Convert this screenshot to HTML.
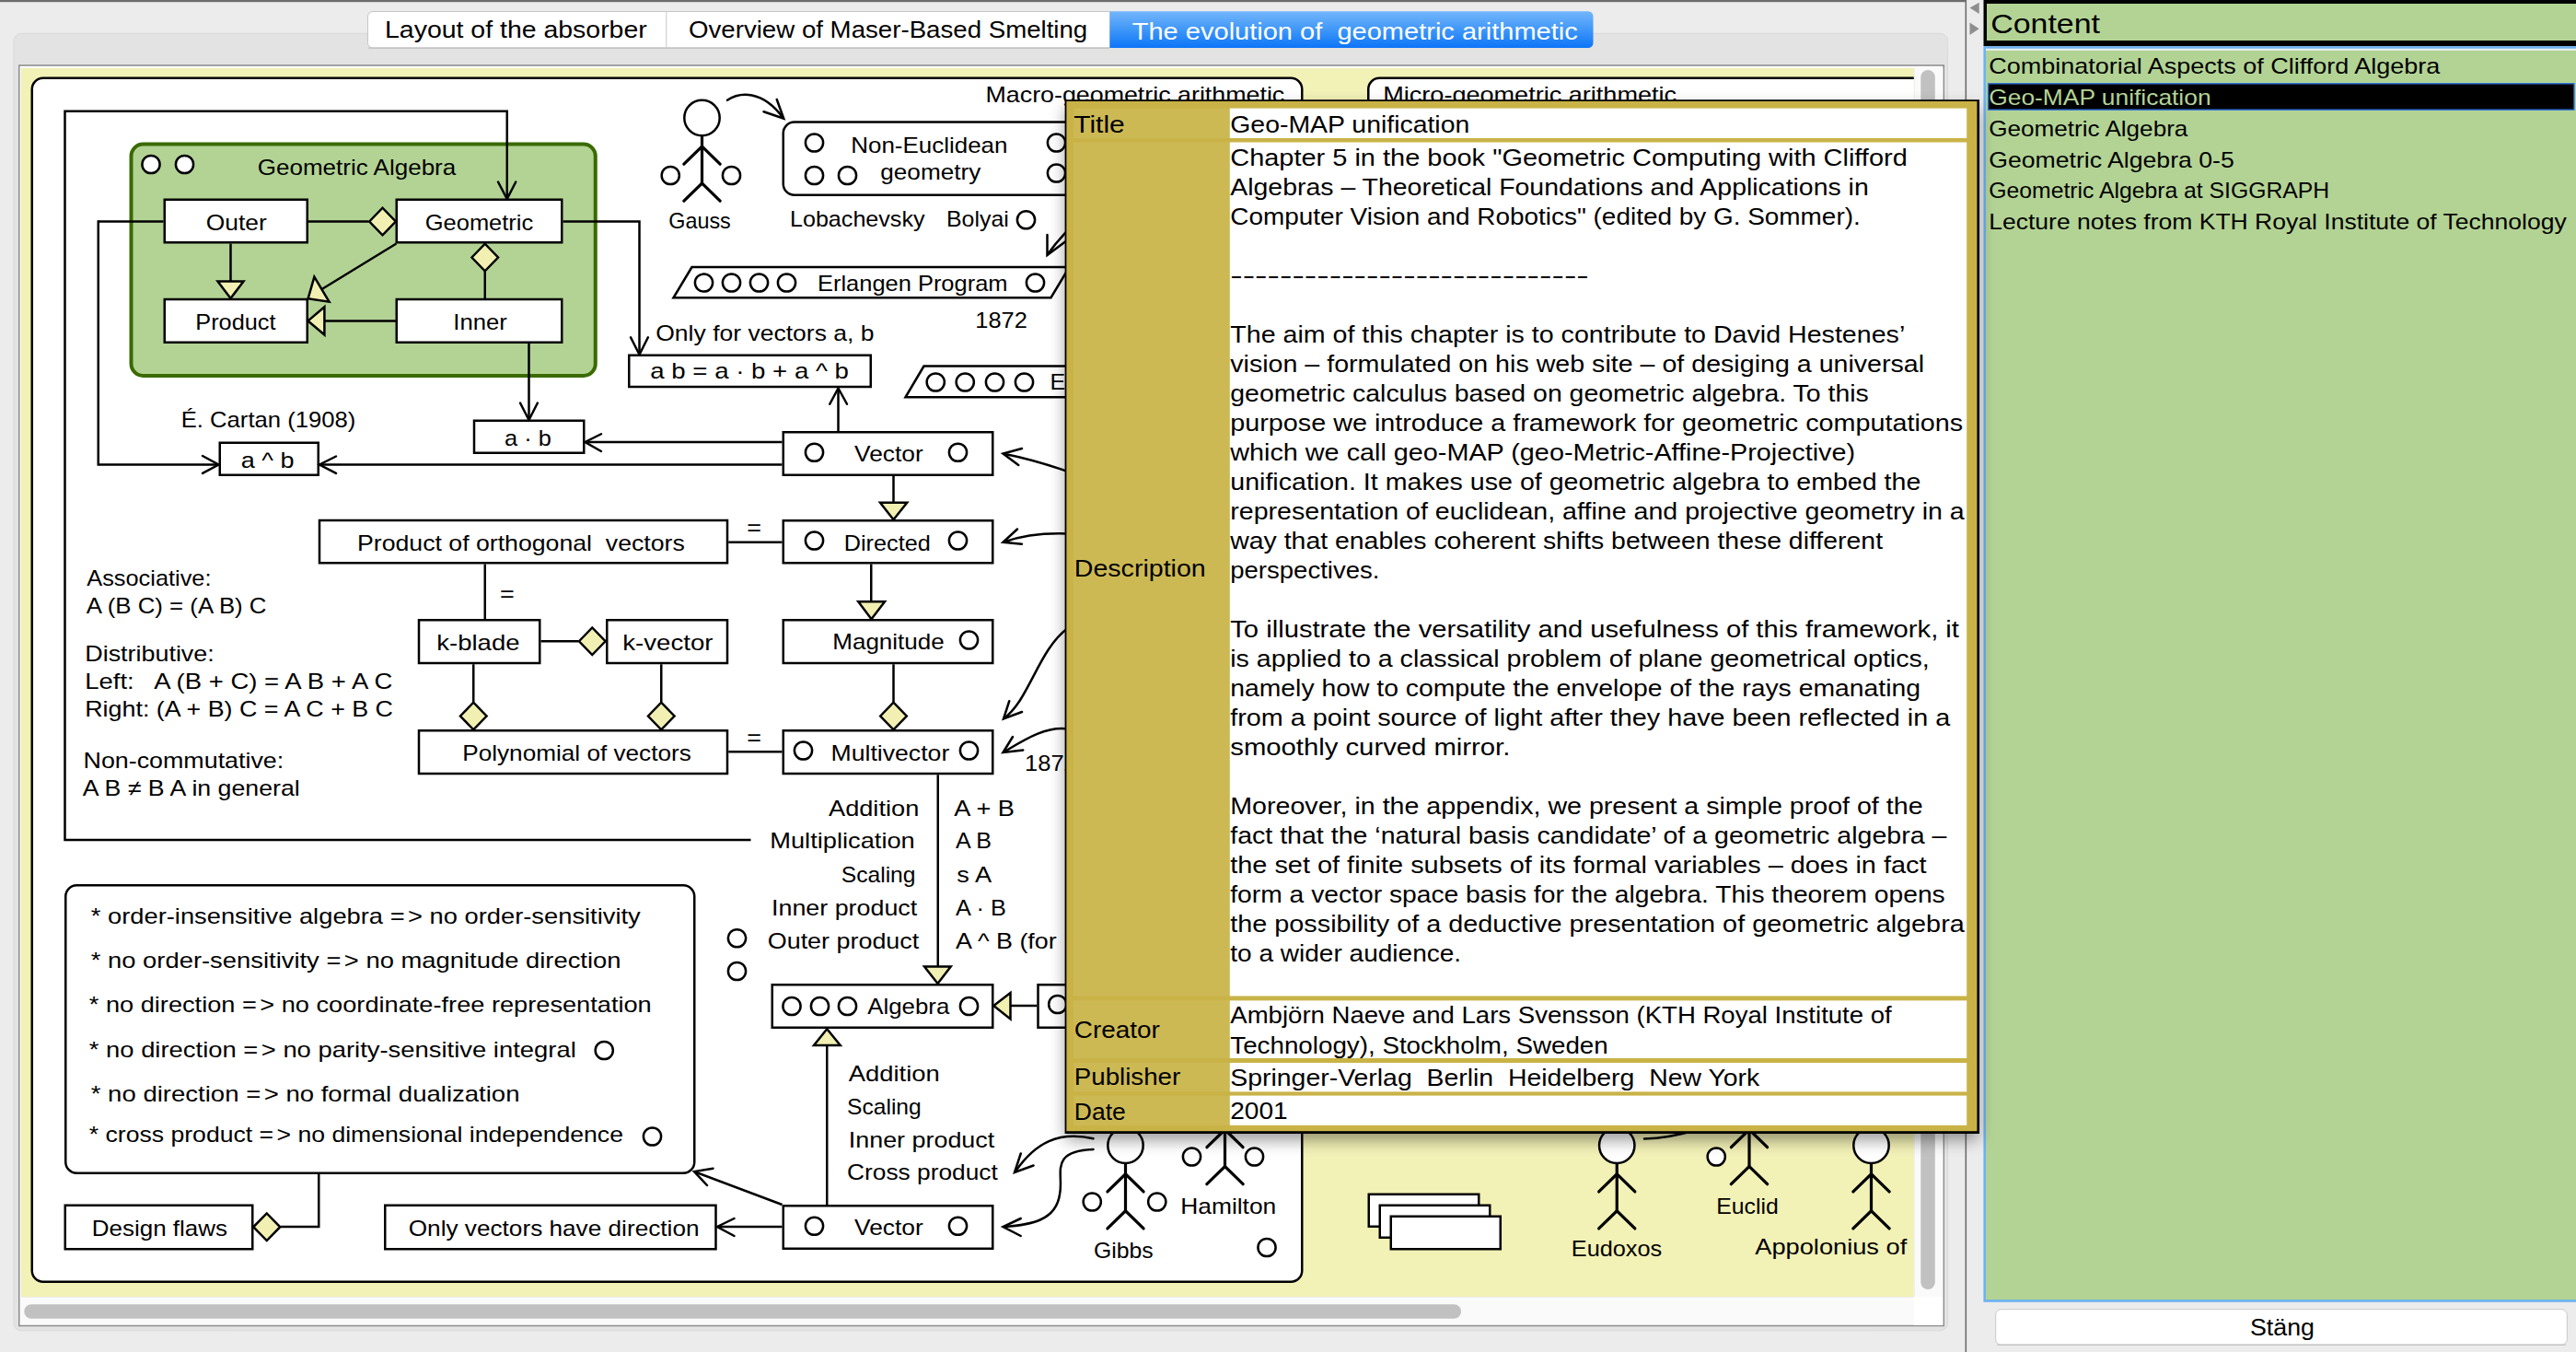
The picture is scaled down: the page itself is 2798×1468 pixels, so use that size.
<!DOCTYPE html>
<html><head><meta charset="utf-8"><title>Conzilla</title>
<style>
html,body{margin:0;padding:0;background:#ECECEC;}
body{width:2798px;height:1468px;overflow:hidden;}
svg{display:block;}
svg text{font-family:"Liberation Sans",sans-serif;}
</style></head><body>
<svg width="2798" height="1468" viewBox="0 0 2798 1468">
<defs>
<clipPath id="vp"><rect x="23" y="74" width="2055.75" height="1334"/></clipPath>
<linearGradient id="tabg" x1="0" y1="0" x2="0" y2="1"><stop offset="0" stop-color="#74B6FB"/><stop offset="0.5" stop-color="#3F97F8"/><stop offset="1" stop-color="#0D75F8"/></linearGradient>
<filter id="sh" x="-5%" y="-5%" width="110%" height="110%"><feGaussianBlur stdDeviation="9"/><feOffset dx="0" dy="8"/><feComponentTransfer><feFuncA type="linear" slope="0.42"/></feComponentTransfer></filter>
</defs>
<rect x="0" y="0" width="2798" height="1468" fill="#ECECEC"/>
<rect x="0" y="0" width="2135" height="2.2" fill="#6C6C6C"/>
<rect x="15" y="36.3" width="2100.5" height="1408.5" rx="8" ry="8" fill="#E3E3E3" stroke="#DADADA" stroke-width="1"/>
<path d="M405,12.5 H1205.5 V52 H405 a5.5,5.5 0 0 1 -5.5,-5.5 V18 a5.5,5.5 0 0 1 5.5,-5.5 z" fill="#fff" stroke="#C6C6C6" stroke-width="1"/>
<rect x="400" y="51.5" width="805" height="1.3" fill="#B9B9B9" opacity=".8"/>
<line x1="723.75" y1="13" x2="723.75" y2="51.5" stroke="#D2D2D2" stroke-width="1.2"/>
<path d="M1205.5,12.2 H1725 a5.5,5.5 0 0 1 5.5,5.5 V46.5 a5.5,5.5 0 0 1 -5.5,5.5 H1205.5 z" fill="url(#tabg)"/>
<text x="418.00" y="41.25" font-size="26" fill="#000" textLength="284.75" lengthAdjust="spacingAndGlyphs" xml:space="preserve" >Layout of the absorber</text>
<text x="748.00" y="41.25" font-size="26" fill="#000" textLength="433.25" lengthAdjust="spacingAndGlyphs" xml:space="preserve" >Overview of Maser-Based Smelting</text>
<text x="1229.75" y="42.50" font-size="26" fill="#fff" textLength="484.00" lengthAdjust="spacingAndGlyphs" xml:space="preserve" >The evolution of  geometric arithmetic</text>
<rect x="20.75" y="71" width="2090.5" height="1368.5" fill="#FAFAFA" stroke="#8C8C8C" stroke-width="1.5"/>
<rect x="22" y="72.2" width="2088" height="1.6" fill="#fff"/>
<rect x="2078.75" y="74" width="31.5" height="1334" fill="#FAFAFA"/>
<rect x="2078.75" y="74" width="1" height="1334" fill="#EDEDED"/>
<rect x="23" y="1408" width="2056" height="1" fill="#EDEDED"/>
<rect x="2078.75" y="1408" width="31.5" height="31" fill="#fff"/>
<rect x="26.25" y="1416.25" width="1560.75" height="15.5" rx="7.75" ry="7.75" fill="#C1C1C1"/>
<rect x="2086.3" y="76" width="15.5" height="1324" rx="7.75" ry="7.75" fill="#C1C1C1"/>
<rect x="2134.5" y="0" width="1.6" height="1468" fill="#6E6E6E"/>
<polygon points="2139.5,8.6 2149.7,2.7 2149.7,15" fill="#8E8E8E"/>
<polygon points="2149.7,31.3 2139.5,24.5 2139.5,38" fill="#8E8E8E"/>
<g clip-path="url(#vp)">
<rect x="23" y="74" width="2056" height="1334" fill="#F2F1B6"/>
<rect x="34.75" y="84.75" width="1379.50" height="1307.00" fill="#fff" stroke="#000" stroke-width="2.5" rx="12" ry="12"/>
<rect x="1486.25" y="84.75" width="812.50" height="1114.00" fill="#fff" stroke="#000" stroke-width="2.5" rx="12" ry="12"/>
<text x="1070.50" y="111.25" font-size="24" fill="#000" textLength="324.75" lengthAdjust="spacingAndGlyphs" xml:space="preserve" >Macro-geometric arithmetic</text>
<text x="1502.25" y="111.25" font-size="24" fill="#000" textLength="318.80" lengthAdjust="spacingAndGlyphs" xml:space="preserve" >Micro-geometric arithmetic</text>
<rect x="142.50" y="156.50" width="504.25" height="251.50" fill="#B3D395" stroke="#3A6A00" stroke-width="4" rx="13" ry="13"/>
<polyline points="815.50,912.00 70.50,912.00 70.50,120.75 550.75,120.75 550.75,215.00" fill="none" stroke="#000" stroke-width="2.5" stroke-linecap="butt" stroke-linejoin="miter"/>
<polyline points="541.00,197.50 550.75,216.00 560.25,197.50" fill="none" stroke="#000" stroke-width="2.5" stroke-linecap="round" stroke-linejoin="miter"/>
<circle cx="164.00" cy="178.50" r="9.6" fill="#fff" stroke="#000" stroke-width="2.5"/>
<circle cx="200.50" cy="178.50" r="9.6" fill="#fff" stroke="#000" stroke-width="2.5"/>
<text x="279.75" y="190.00" font-size="24" fill="#000" textLength="215.50" lengthAdjust="spacingAndGlyphs" xml:space="preserve" >Geometric Algebra</text>
<polyline points="335.00,240.50 400.50,240.50" fill="none" stroke="#000" stroke-width="2.5" stroke-linecap="butt" stroke-linejoin="miter"/>
<polyline points="106.75,240.50 177.50,240.50" fill="none" stroke="#000" stroke-width="2.5" stroke-linecap="butt" stroke-linejoin="miter"/>
<polyline points="106.75,239.25 106.75,504.50 236.00,504.50" fill="none" stroke="#000" stroke-width="2.5" stroke-linecap="butt" stroke-linejoin="miter"/>
<polyline points="220.00,495.00 237.50,504.50 220.00,513.90" fill="none" stroke="#000" stroke-width="2.5" stroke-linecap="round" stroke-linejoin="miter"/>
<polyline points="250.50,264.50 250.50,306.00" fill="none" stroke="#000" stroke-width="2.5" stroke-linecap="butt" stroke-linejoin="miter"/>
<polyline points="526.75,294.00 526.75,324.00" fill="none" stroke="#000" stroke-width="2.5" stroke-linecap="butt" stroke-linejoin="miter"/>
<polyline points="430.50,264.50 350.00,313.70" fill="none" stroke="#000" stroke-width="2.5" stroke-linecap="butt" stroke-linejoin="miter"/>
<polyline points="352.40,348.40 430.00,348.40" fill="none" stroke="#000" stroke-width="2.5" stroke-linecap="butt" stroke-linejoin="miter"/>
<polyline points="611.50,240.50 694.50,240.50 694.50,384.00" fill="none" stroke="#000" stroke-width="2.5" stroke-linecap="butt" stroke-linejoin="miter"/>
<polyline points="685.00,366.25 694.50,385.00 703.90,366.25" fill="none" stroke="#000" stroke-width="2.5" stroke-linecap="round" stroke-linejoin="miter"/>
<polyline points="574.50,373.00 574.50,455.00" fill="none" stroke="#000" stroke-width="2.5" stroke-linecap="butt" stroke-linejoin="miter"/>
<polyline points="565.00,437.50 574.50,456.00 583.90,437.50" fill="none" stroke="#000" stroke-width="2.5" stroke-linecap="round" stroke-linejoin="miter"/>
<rect x="178.75" y="216.75" width="155.00" height="46.50" fill="#fff" stroke="#000" stroke-width="2.5"/>
<text x="223.75" y="249.50" font-size="24" fill="#000" textLength="66.00" lengthAdjust="spacingAndGlyphs" xml:space="preserve" >Outer</text>
<rect x="430.75" y="216.75" width="179.50" height="46.50" fill="#fff" stroke="#000" stroke-width="2.5"/>
<text x="461.75" y="249.50" font-size="24" fill="#000" textLength="117.50" lengthAdjust="spacingAndGlyphs" xml:space="preserve" >Geometric</text>
<rect x="178.75" y="325.00" width="155.00" height="46.75" fill="#fff" stroke="#000" stroke-width="2.5"/>
<text x="212.25" y="358.00" font-size="24" fill="#000" textLength="87.25" lengthAdjust="spacingAndGlyphs" xml:space="preserve" >Product</text>
<rect x="430.75" y="325.00" width="179.50" height="46.75" fill="#fff" stroke="#000" stroke-width="2.5"/>
<text x="492.25" y="358.00" font-size="24" fill="#000" textLength="58.50" lengthAdjust="spacingAndGlyphs" xml:space="preserve" >Inner</text>
<polygon points="401.20,240.50 415.50,225.72 429.80,240.50 415.50,255.28" fill="#F1F0B2" stroke="#000" stroke-width="2.5" stroke-linejoin="miter"/>
<polygon points="512.45,279.50 526.75,264.72 541.05,279.50 526.75,294.28" fill="#F1F0B2" stroke="#000" stroke-width="2.5" stroke-linejoin="miter"/>
<polygon points="236.51,305.50 264.49,305.50 250.50,323.92" fill="#F1F0B2" stroke="#000" stroke-width="2.5" stroke-linejoin="miter"/>
<polygon points="341.40,300.70 334.60,324.20 357.50,327.70" fill="#F1F0B2" stroke="#000" stroke-width="2.5" stroke-linejoin="miter"/>
<polygon points="334.60,348.40 352.40,333.30 352.40,363.50" fill="#F1F0B2" stroke="#000" stroke-width="2.5" stroke-linejoin="miter"/>
<rect x="515.00" y="456.75" width="119.25" height="35.00" fill="#fff" stroke="#000" stroke-width="2.5"/>
<text x="548.00" y="483.75" font-size="24" fill="#000" textLength="50.75" lengthAdjust="spacingAndGlyphs" xml:space="preserve" >a · b</text>
<text x="196.75" y="463.75" font-size="24" fill="#000" textLength="189.50" lengthAdjust="spacingAndGlyphs" xml:space="preserve" >É. Cartan (1908)</text>
<rect x="238.75" y="480.75" width="107.00" height="35.00" fill="#fff" stroke="#000" stroke-width="2.5"/>
<text x="261.75" y="507.50" font-size="24" fill="#000" textLength="57.75" lengthAdjust="spacingAndGlyphs" xml:space="preserve" >a ^ b</text>
<polyline points="849.50,504.50 348.00,504.50" fill="none" stroke="#000" stroke-width="2.5" stroke-linecap="butt" stroke-linejoin="miter"/>
<polyline points="365.00,495.50 347.00,504.50 365.00,513.90" fill="none" stroke="#000" stroke-width="2.5" stroke-linecap="round" stroke-linejoin="miter"/>
<polyline points="849.50,480.00 636.50,480.00" fill="none" stroke="#000" stroke-width="2.5" stroke-linecap="butt" stroke-linejoin="miter"/>
<polyline points="653.00,471.25 635.50,480.00 653.00,490.00" fill="none" stroke="#000" stroke-width="2.5" stroke-linecap="round" stroke-linejoin="miter"/>
<text x="712.25" y="369.50" font-size="24" fill="#000" textLength="237.25" lengthAdjust="spacingAndGlyphs" xml:space="preserve" >Only for vectors a, b</text>
<rect x="683.25" y="385.75" width="262.50" height="34.25" fill="#fff" stroke="#000" stroke-width="2.5"/>
<text x="706.25" y="411.25" font-size="24" fill="#000" textLength="215.75" lengthAdjust="spacingAndGlyphs" xml:space="preserve" >a b = a · b + a ^ b</text>
<polyline points="910.50,468.00 910.50,422.00" fill="none" stroke="#000" stroke-width="2.5" stroke-linecap="butt" stroke-linejoin="miter"/>
<polyline points="901.25,438.75 910.50,421.50 920.00,438.75" fill="none" stroke="#000" stroke-width="2.5" stroke-linecap="round" stroke-linejoin="miter"/>
<rect x="850.75" y="469.25" width="227.50" height="46.50" fill="#fff" stroke="#000" stroke-width="2.5"/>
<circle cx="884.50" cy="491.25" r="9.6" fill="#fff" stroke="#000" stroke-width="2.5"/>
<circle cx="1040.50" cy="491.25" r="9.6" fill="#fff" stroke="#000" stroke-width="2.5"/>
<text x="928.00" y="501.25" font-size="24" fill="#000" textLength="74.75" lengthAdjust="spacingAndGlyphs" xml:space="preserve" >Vector</text>
<polyline points="970.50,517.00 970.50,546.25" fill="none" stroke="#000" stroke-width="2.5" stroke-linecap="butt" stroke-linejoin="miter"/>
<polygon points="956.03,545.75 985.21,545.75 970.50,564.19" fill="#F1F0B2" stroke="#000" stroke-width="2.5" stroke-linejoin="miter"/>
<rect x="850.75" y="565.25" width="227.50" height="46.00" fill="#fff" stroke="#000" stroke-width="2.5"/>
<circle cx="884.50" cy="587.00" r="9.6" fill="#fff" stroke="#000" stroke-width="2.5"/>
<circle cx="1040.50" cy="587.00" r="9.6" fill="#fff" stroke="#000" stroke-width="2.5"/>
<text x="916.75" y="597.50" font-size="24" fill="#000" textLength="94.00" lengthAdjust="spacingAndGlyphs" xml:space="preserve" >Directed</text>
<rect x="347.00" y="565.00" width="443.00" height="46.25" fill="#fff" stroke="#000" stroke-width="2.5"/>
<text x="388.00" y="597.50" font-size="24" fill="#000" textLength="355.75" lengthAdjust="spacingAndGlyphs" xml:space="preserve" >Product of orthogonal  vectors</text>
<polyline points="791.25,588.75 849.50,588.75" fill="none" stroke="#000" stroke-width="2.5" stroke-linecap="butt" stroke-linejoin="miter"/>
<text x="811.25" y="580.50" font-size="24" fill="#000" textLength="15.75" lengthAdjust="spacingAndGlyphs" xml:space="preserve" >=</text>
<polyline points="946.25,612.50 946.25,653.75" fill="none" stroke="#000" stroke-width="2.5" stroke-linecap="butt" stroke-linejoin="miter"/>
<polygon points="932.25,653.25 960.99,653.25 946.50,672.17" fill="#F1F0B2" stroke="#000" stroke-width="2.5" stroke-linejoin="miter"/>
<rect x="850.75" y="673.25" width="227.50" height="46.75" fill="#fff" stroke="#000" stroke-width="2.5"/>
<text x="904.25" y="705.00" font-size="24" fill="#000" textLength="121.50" lengthAdjust="spacingAndGlyphs" xml:space="preserve" >Magnitude</text>
<circle cx="1052.50" cy="695.00" r="9.6" fill="#fff" stroke="#000" stroke-width="2.5"/>
<polyline points="526.75,612.50 526.75,672.00" fill="none" stroke="#000" stroke-width="2.5" stroke-linecap="butt" stroke-linejoin="miter"/>
<text x="543.00" y="653.00" font-size="24" fill="#000" textLength="15.75" lengthAdjust="spacingAndGlyphs" xml:space="preserve" >=</text>
<rect x="455.00" y="673.25" width="131.25" height="46.75" fill="#fff" stroke="#000" stroke-width="2.5"/>
<text x="474.25" y="706.00" font-size="24" fill="#000" textLength="90.25" lengthAdjust="spacingAndGlyphs" xml:space="preserve" >k-blade</text>
<polyline points="587.50,696.25 628.25,696.25" fill="none" stroke="#000" stroke-width="2.5" stroke-linecap="butt" stroke-linejoin="miter"/>
<polygon points="628.95,696.25 643.25,681.47 657.55,696.25 643.25,711.03" fill="#F1F0B2" stroke="#000" stroke-width="2.5" stroke-linejoin="miter"/>
<rect x="659.25" y="673.25" width="130.75" height="46.75" fill="#fff" stroke="#000" stroke-width="2.5"/>
<text x="676.25" y="705.50" font-size="24" fill="#000" textLength="98.25" lengthAdjust="spacingAndGlyphs" xml:space="preserve" >k-vector</text>
<polyline points="514.25,721.25 514.25,762.50" fill="none" stroke="#000" stroke-width="2.5" stroke-linecap="butt" stroke-linejoin="miter"/>
<polygon points="499.95,777.50 514.25,762.72 528.55,777.50 514.25,792.28" fill="#F1F0B2" stroke="#000" stroke-width="2.5" stroke-linejoin="miter"/>
<polyline points="718.25,721.25 718.25,762.50" fill="none" stroke="#000" stroke-width="2.5" stroke-linecap="butt" stroke-linejoin="miter"/>
<polygon points="703.95,777.50 718.25,762.72 732.55,777.50 718.25,792.28" fill="#F1F0B2" stroke="#000" stroke-width="2.5" stroke-linejoin="miter"/>
<rect x="455.00" y="793.25" width="335.00" height="46.75" fill="#fff" stroke="#000" stroke-width="2.5"/>
<text x="502.25" y="826.25" font-size="24" fill="#000" textLength="248.50" lengthAdjust="spacingAndGlyphs" xml:space="preserve" >Polynomial of vectors</text>
<polyline points="791.25,816.25 849.50,816.25" fill="none" stroke="#000" stroke-width="2.5" stroke-linecap="butt" stroke-linejoin="miter"/>
<text x="811.25" y="809.00" font-size="24" fill="#000" textLength="15.75" lengthAdjust="spacingAndGlyphs" xml:space="preserve" >=</text>
<rect x="850.75" y="793.25" width="227.50" height="46.75" fill="#fff" stroke="#000" stroke-width="2.5"/>
<circle cx="872.50" cy="815.00" r="9.6" fill="#fff" stroke="#000" stroke-width="2.5"/>
<circle cx="1052.50" cy="815.00" r="9.6" fill="#fff" stroke="#000" stroke-width="2.5"/>
<text x="902.50" y="826.25" font-size="24" fill="#000" textLength="128.75" lengthAdjust="spacingAndGlyphs" xml:space="preserve" >Multivector</text>
<polyline points="970.50,721.25 970.50,762.50" fill="none" stroke="#000" stroke-width="2.5" stroke-linecap="butt" stroke-linejoin="miter"/>
<polygon points="956.20,777.50 970.50,762.72 984.80,777.50 970.50,792.28" fill="#F1F0B2" stroke="#000" stroke-width="2.5" stroke-linejoin="miter"/>
<polyline points="1018.75,841.25 1018.75,1050.00" fill="none" stroke="#000" stroke-width="2.5" stroke-linecap="butt" stroke-linejoin="miter"/>
<polygon points="1004.03,1049.50 1032.73,1049.50 1018.50,1067.94" fill="#F1F0B2" stroke="#000" stroke-width="2.5" stroke-linejoin="miter"/>
<text x="900.00" y="885.50" font-size="24" fill="#000" textLength="98.25" lengthAdjust="spacingAndGlyphs" xml:space="preserve" >Addition</text>
<text x="1036.25" y="885.50" font-size="24" fill="#000" textLength="65.75" lengthAdjust="spacingAndGlyphs" xml:space="preserve" >A + B</text>
<text x="836.25" y="921.25" font-size="24" fill="#000" textLength="157.50" lengthAdjust="spacingAndGlyphs" xml:space="preserve" >Multiplication</text>
<text x="1038.00" y="921.25" font-size="24" fill="#000" textLength="39.00" lengthAdjust="spacingAndGlyphs" xml:space="preserve" >A B</text>
<text x="913.75" y="957.50" font-size="24" fill="#000" textLength="80.75" lengthAdjust="spacingAndGlyphs" xml:space="preserve" >Scaling</text>
<text x="1039.25" y="957.50" font-size="24" fill="#000" textLength="37.75" lengthAdjust="spacingAndGlyphs" xml:space="preserve" >s A</text>
<text x="838.00" y="993.75" font-size="24" fill="#000" textLength="158.25" lengthAdjust="spacingAndGlyphs" xml:space="preserve" >Inner product</text>
<text x="1038.00" y="993.75" font-size="24" fill="#000" textLength="54.75" lengthAdjust="spacingAndGlyphs" xml:space="preserve" >A · B</text>
<text x="833.75" y="1030.00" font-size="24" fill="#000" textLength="164.50" lengthAdjust="spacingAndGlyphs" xml:space="preserve" >Outer product</text>
<text x="1038.00" y="1030.00" font-size="24" fill="#000" textLength="109.75" lengthAdjust="spacingAndGlyphs" xml:space="preserve" >A ^ B (for</text>
<circle cx="800.50" cy="1018.75" r="9.6" fill="#fff" stroke="#000" stroke-width="2.5"/>
<circle cx="800.50" cy="1054.50" r="9.6" fill="#fff" stroke="#000" stroke-width="2.5"/>
<rect x="838.75" y="1069.25" width="239.50" height="46.50" fill="#fff" stroke="#000" stroke-width="2.5"/>
<circle cx="860.00" cy="1092.50" r="9.6" fill="#fff" stroke="#000" stroke-width="2.5"/>
<circle cx="890.50" cy="1092.50" r="9.6" fill="#fff" stroke="#000" stroke-width="2.5"/>
<circle cx="920.50" cy="1092.50" r="9.6" fill="#fff" stroke="#000" stroke-width="2.5"/>
<circle cx="1052.50" cy="1092.50" r="9.6" fill="#fff" stroke="#000" stroke-width="2.5"/>
<text x="942.25" y="1101.25" font-size="24" fill="#000" textLength="89.00" lengthAdjust="spacingAndGlyphs" xml:space="preserve" >Algebra</text>
<polyline points="1097.00,1092.00 1126.25,1092.00" fill="none" stroke="#000" stroke-width="2.5" stroke-linecap="butt" stroke-linejoin="miter"/>
<polygon points="1079.31,1092.01 1097.50,1078.02 1097.50,1106.46" fill="#F1F0B2" stroke="#000" stroke-width="2.5" stroke-linejoin="miter"/>
<rect x="1127.50" y="1069.25" width="171.25" height="46.50" fill="#fff" stroke="#000" stroke-width="2.5"/>
<circle cx="1148.75" cy="1090.50" r="9.6" fill="#fff" stroke="#000" stroke-width="2.5"/>
<polygon points="898.25,1117.29 884.04,1135.00 912.70,1135.00" fill="#F1F0B2" stroke="#000" stroke-width="2.5" stroke-linejoin="miter"/>
<polyline points="898.25,1134.50 898.25,1308.00" fill="none" stroke="#000" stroke-width="2.5" stroke-linecap="butt" stroke-linejoin="miter"/>
<text x="921.75" y="1173.75" font-size="24" fill="#000" textLength="99.00" lengthAdjust="spacingAndGlyphs" xml:space="preserve" >Addition</text>
<text x="920.00" y="1209.75" font-size="24" fill="#000" textLength="80.75" lengthAdjust="spacingAndGlyphs" xml:space="preserve" >Scaling</text>
<text x="921.75" y="1245.50" font-size="24" fill="#000" textLength="158.50" lengthAdjust="spacingAndGlyphs" xml:space="preserve" >Inner product</text>
<text x="920.00" y="1281.25" font-size="24" fill="#000" textLength="163.75" lengthAdjust="spacingAndGlyphs" xml:space="preserve" >Cross product</text>
<rect x="850.75" y="1309.25" width="227.50" height="46.50" fill="#fff" stroke="#000" stroke-width="2.5"/>
<circle cx="884.50" cy="1331.25" r="9.6" fill="#fff" stroke="#000" stroke-width="2.5"/>
<circle cx="1040.50" cy="1331.25" r="9.6" fill="#fff" stroke="#000" stroke-width="2.5"/>
<text x="928.00" y="1341.25" font-size="24" fill="#000" textLength="74.75" lengthAdjust="spacingAndGlyphs" xml:space="preserve" >Vector</text>
<rect x="418.25" y="1308.75" width="359.25" height="47.50" fill="#fff" stroke="#000" stroke-width="2.5"/>
<text x="443.75" y="1342.00" font-size="24" fill="#000" textLength="315.75" lengthAdjust="spacingAndGlyphs" xml:space="preserve" >Only vectors have direction</text>
<polyline points="849.50,1332.00 780.00,1332.00" fill="none" stroke="#000" stroke-width="2.5" stroke-linecap="butt" stroke-linejoin="miter"/>
<polyline points="797.50,1323.00 779.00,1332.00 797.50,1342.00" fill="none" stroke="#000" stroke-width="2.5" stroke-linecap="round" stroke-linejoin="miter"/>
<polyline points="849.50,1308.00 755.00,1272.50" fill="none" stroke="#000" stroke-width="2.5" stroke-linecap="butt" stroke-linejoin="miter"/>
<polyline points="774.50,1268.75 754.00,1272.00 768.00,1287.00" fill="none" stroke="#000" stroke-width="2.5" stroke-linecap="round" stroke-linejoin="miter"/>
<rect x="71.25" y="961.25" width="683.00" height="312.50" fill="#fff" stroke="#000" stroke-width="2.5" rx="12" ry="12"/>
<text x="98.75" y="1003.00" font-size="24" fill="#000" textLength="597.00" lengthAdjust="spacingAndGlyphs" xml:space="preserve" >* order-insensitive algebra =<tspan dx="3">&gt;</tspan> no order-sensitivity</text>
<text x="98.75" y="1051.25" font-size="24" fill="#000" textLength="575.75" lengthAdjust="spacingAndGlyphs" xml:space="preserve" >* no order-sensitivity =<tspan dx="3">&gt;</tspan> no magnitude direction</text>
<text x="96.75" y="1099.25" font-size="24" fill="#000" textLength="611.00" lengthAdjust="spacingAndGlyphs" xml:space="preserve" >* no direction =<tspan dx="3">&gt;</tspan> no coordinate-free representation</text>
<text x="96.75" y="1147.50" font-size="24" fill="#000" textLength="529.00" lengthAdjust="spacingAndGlyphs" xml:space="preserve" >* no direction =<tspan dx="3">&gt;</tspan> no parity-sensitive integral</text>
<text x="98.75" y="1195.50" font-size="24" fill="#000" textLength="465.75" lengthAdjust="spacingAndGlyphs" xml:space="preserve" >* no direction =<tspan dx="3">&gt;</tspan> no formal dualization</text>
<text x="96.75" y="1240.00" font-size="24" fill="#000" textLength="580.25" lengthAdjust="spacingAndGlyphs" xml:space="preserve" >* cross product =<tspan dx="3">&gt;</tspan> no dimensional independence</text>
<circle cx="656.25" cy="1140.50" r="9.6" fill="#fff" stroke="#000" stroke-width="2.5"/>
<circle cx="708.50" cy="1234.00" r="9.6" fill="#fff" stroke="#000" stroke-width="2.5"/>
<polyline points="346.25,1275.00 346.25,1332.00 305.00,1332.00" fill="none" stroke="#000" stroke-width="2.5" stroke-linecap="butt" stroke-linejoin="miter"/>
<polygon points="275.20,1332.25 289.75,1317.46 304.30,1332.25 289.75,1347.04" fill="#F1F0B2" stroke="#000" stroke-width="2.5" stroke-linejoin="miter"/>
<rect x="70.75" y="1308.75" width="203.50" height="47.50" fill="#fff" stroke="#000" stroke-width="2.5"/>
<text x="99.75" y="1342.00" font-size="24" fill="#000" textLength="147.25" lengthAdjust="spacingAndGlyphs" xml:space="preserve" >Design flaws</text>
<text x="94.25" y="636.25" font-size="24" fill="#000" textLength="135.25" lengthAdjust="spacingAndGlyphs" xml:space="preserve" >Associative:</text>
<text x="93.75" y="666.25" font-size="24" fill="#000" textLength="195.75" lengthAdjust="spacingAndGlyphs" xml:space="preserve" >A (B C) = (A B) C</text>
<text x="92.25" y="717.50" font-size="24" fill="#000" textLength="140.50" lengthAdjust="spacingAndGlyphs" xml:space="preserve" >Distributive:</text>
<text x="92.25" y="748.00" font-size="24" fill="#000" textLength="334.00" lengthAdjust="spacingAndGlyphs" xml:space="preserve" >Left:   A (B + C) = A B + A C</text>
<text x="92.25" y="778.00" font-size="24" fill="#000" textLength="334.75" lengthAdjust="spacingAndGlyphs" xml:space="preserve" >Right: (A + B) C = A C + B C</text>
<text x="90.50" y="833.75" font-size="24" fill="#000" textLength="217.75" lengthAdjust="spacingAndGlyphs" xml:space="preserve" >Non-commutative:</text>
<text x="89.75" y="863.75" font-size="24" fill="#000" textLength="236.00" lengthAdjust="spacingAndGlyphs" xml:space="preserve" >A B ≠ B A in general</text>
<circle cx="762.50" cy="128.00" r="19.2" fill="#fff" stroke="#000" stroke-width="2.5"/>
<polyline points="762.50,148.00 762.50,199.50" fill="none" stroke="#000" stroke-width="3.2" stroke-linecap="butt" stroke-linejoin="miter"/>
<polyline points="742.90,178.20 762.50,159.00 782.10,178.20" fill="none" stroke="#000" stroke-width="3.2" stroke-linecap="round" stroke-linejoin="miter"/>
<polyline points="742.90,218.20 762.50,199.00 782.10,218.20" fill="none" stroke="#000" stroke-width="3.2" stroke-linecap="round" stroke-linejoin="miter"/>
<circle cx="728.25" cy="190.50" r="9.6" fill="#fff" stroke="#000" stroke-width="2.5"/>
<circle cx="794.50" cy="190.50" r="9.6" fill="#fff" stroke="#000" stroke-width="2.5"/>
<text x="726.25" y="247.50" font-size="24" fill="#000" textLength="67.50" lengthAdjust="spacingAndGlyphs" xml:space="preserve" >Gauss</text>
<path d="M790,108.75 C 803,100 828,97 850.5,128" fill="none" stroke="#000" stroke-width="2.5" stroke-linecap="round"/>
<polyline points="843.75,108.00 851.25,128.75 829.50,121.25" fill="none" stroke="#000" stroke-width="2.5" stroke-linecap="round" stroke-linejoin="miter"/>
<rect x="850.75" y="132.50" width="448.00" height="79.25" fill="#fff" stroke="#000" stroke-width="2.5" rx="12" ry="12"/>
<circle cx="884.50" cy="155.00" r="9.6" fill="#fff" stroke="#000" stroke-width="2.5"/>
<circle cx="884.50" cy="190.50" r="9.6" fill="#fff" stroke="#000" stroke-width="2.5"/>
<circle cx="920.50" cy="190.50" r="9.6" fill="#fff" stroke="#000" stroke-width="2.5"/>
<circle cx="1147.50" cy="155.00" r="9.6" fill="#fff" stroke="#000" stroke-width="2.5"/>
<circle cx="1147.50" cy="188.00" r="9.6" fill="#fff" stroke="#000" stroke-width="2.5"/>
<text x="924.25" y="165.50" font-size="24" fill="#000" textLength="170.25" lengthAdjust="spacingAndGlyphs" xml:space="preserve" >Non-Euclidean</text>
<text x="956.25" y="194.50" font-size="24" fill="#000" textLength="109.00" lengthAdjust="spacingAndGlyphs" xml:space="preserve" >geometry</text>
<text x="858.00" y="245.50" font-size="24" fill="#000" textLength="146.50" lengthAdjust="spacingAndGlyphs" xml:space="preserve" >Lobachevsky</text>
<text x="1028.00" y="245.50" font-size="24" fill="#000" textLength="67.75" lengthAdjust="spacingAndGlyphs" xml:space="preserve" >Bolyai</text>
<circle cx="1114.50" cy="238.75" r="9.6" fill="#fff" stroke="#000" stroke-width="2.5"/>
<path d="M1160,250 Q 1148,262 1138,276" fill="none" stroke="#000" stroke-width="2.5" stroke-linecap="round"/>
<polyline points="1137.50,255.00 1137.50,277.00 1157.00,262.50" fill="none" stroke="#000" stroke-width="2.5" stroke-linecap="round" stroke-linejoin="miter"/>
<polygon points="751.50,290.00 731.50,323.25 1141.50,323.25 1161.50,290.00" fill="#fff" stroke="#000" stroke-width="2.5" stroke-linejoin="miter"/>
<circle cx="764.50" cy="307.00" r="9.6" fill="#fff" stroke="#000" stroke-width="2.5"/>
<circle cx="794.50" cy="307.00" r="9.6" fill="#fff" stroke="#000" stroke-width="2.5"/>
<circle cx="824.50" cy="307.00" r="9.6" fill="#fff" stroke="#000" stroke-width="2.5"/>
<circle cx="854.50" cy="307.00" r="9.6" fill="#fff" stroke="#000" stroke-width="2.5"/>
<circle cx="1124.50" cy="307.00" r="9.6" fill="#fff" stroke="#000" stroke-width="2.5"/>
<text x="888.00" y="315.50" font-size="24" fill="#000" textLength="206.50" lengthAdjust="spacingAndGlyphs" xml:space="preserve" >Erlangen Program</text>
<text x="1059.25" y="355.50" font-size="24" fill="#000" textLength="56.50" lengthAdjust="spacingAndGlyphs" xml:space="preserve" >1872</text>
<polygon points="1003.50,397.50 983.50,431.25 1400.00,431.25 1420.00,397.50" fill="#fff" stroke="#000" stroke-width="2.5" stroke-linejoin="miter"/>
<circle cx="1016.25" cy="415.00" r="9.6" fill="#fff" stroke="#000" stroke-width="2.5"/>
<circle cx="1048.25" cy="415.00" r="9.6" fill="#fff" stroke="#000" stroke-width="2.5"/>
<circle cx="1080.50" cy="415.00" r="9.6" fill="#fff" stroke="#000" stroke-width="2.5"/>
<circle cx="1112.50" cy="415.00" r="9.6" fill="#fff" stroke="#000" stroke-width="2.5"/>
<text x="1140.50" y="423.00" font-size="24" fill="#000" textLength="100.25" lengthAdjust="spacingAndGlyphs" xml:space="preserve" >Erlangen</text>
<path d="M1160,512 Q 1122,499 1090.5,492.8" fill="none" stroke="#000" stroke-width="2.5" stroke-linecap="round"/>
<polyline points="1110.00,487.00 1089.50,492.50 1106.25,505.00" fill="none" stroke="#000" stroke-width="2.5" stroke-linecap="round" stroke-linejoin="miter"/>
<path d="M1160,579.5 Q 1120,578 1090.5,588.5" fill="none" stroke="#000" stroke-width="2.5" stroke-linecap="round"/>
<polyline points="1105.00,574.50 1089.50,588.75 1110.00,590.75" fill="none" stroke="#000" stroke-width="2.5" stroke-linecap="round" stroke-linejoin="miter"/>
<path d="M1160,682 C 1128,705 1118,760 1090.5,780" fill="none" stroke="#000" stroke-width="2.5" stroke-linecap="round"/>
<polyline points="1096.25,761.25 1090.00,780.50 1110.00,773.00" fill="none" stroke="#000" stroke-width="2.5" stroke-linecap="round" stroke-linejoin="miter"/>
<path d="M1160,791.5 C 1135,788 1110,805 1090.5,816.5" fill="none" stroke="#000" stroke-width="2.5" stroke-linecap="round"/>
<polyline points="1100.00,800.00 1089.50,817.00 1111.25,814.50" fill="none" stroke="#000" stroke-width="2.5" stroke-linecap="round" stroke-linejoin="miter"/>
<text x="1113.00" y="837.00" font-size="24" fill="#000" textLength="56.75" lengthAdjust="spacingAndGlyphs" xml:space="preserve" >1872</text>
<path d="M1187.5,1236.25 C 1150,1228 1125,1240 1102.5,1272.5" fill="none" stroke="#000" stroke-width="2.5" stroke-linecap="round"/>
<polyline points="1108.75,1252.50 1102.00,1273.00 1122.50,1265.50" fill="none" stroke="#000" stroke-width="2.5" stroke-linecap="round" stroke-linejoin="miter"/>
<path d="M1187.5,1248 C 1138,1250 1156,1275 1151,1297 C 1147,1325 1120,1330 1090.5,1332" fill="none" stroke="#000" stroke-width="2.5" stroke-linecap="round"/>
<polyline points="1108.75,1323.00 1089.50,1332.00 1108.75,1342.00" fill="none" stroke="#000" stroke-width="2.5" stroke-linecap="round" stroke-linejoin="miter"/>
<circle cx="1222.50" cy="1243.75" r="19.2" fill="#fff" stroke="#000" stroke-width="2.5"/>
<polyline points="1222.50,1263.75 1222.50,1315.25" fill="none" stroke="#000" stroke-width="3.2" stroke-linecap="butt" stroke-linejoin="miter"/>
<polyline points="1202.90,1293.95 1222.50,1274.75 1242.10,1293.95" fill="none" stroke="#000" stroke-width="3.2" stroke-linecap="round" stroke-linejoin="miter"/>
<polyline points="1202.90,1333.95 1222.50,1314.75 1242.10,1333.95" fill="none" stroke="#000" stroke-width="3.2" stroke-linecap="round" stroke-linejoin="miter"/>
<circle cx="1186.25" cy="1305.00" r="9.6" fill="#fff" stroke="#000" stroke-width="2.5"/>
<circle cx="1256.75" cy="1305.00" r="9.6" fill="#fff" stroke="#000" stroke-width="2.5"/>
<text x="1188.00" y="1365.50" font-size="24" fill="#000" textLength="64.75" lengthAdjust="spacingAndGlyphs" xml:space="preserve" >Gibbs</text>
<polyline points="1330.50,1215.50 1330.50,1267.00" fill="none" stroke="#000" stroke-width="3.2" stroke-linecap="butt" stroke-linejoin="miter"/>
<polyline points="1310.90,1245.70 1330.50,1226.50 1350.10,1245.70" fill="none" stroke="#000" stroke-width="3.2" stroke-linecap="round" stroke-linejoin="miter"/>
<polyline points="1310.90,1285.70 1330.50,1266.50 1350.10,1285.70" fill="none" stroke="#000" stroke-width="3.2" stroke-linecap="round" stroke-linejoin="miter"/>
<circle cx="1294.50" cy="1256.00" r="9.6" fill="#fff" stroke="#000" stroke-width="2.5"/>
<circle cx="1362.50" cy="1256.00" r="9.6" fill="#fff" stroke="#000" stroke-width="2.5"/>
<text x="1282.25" y="1317.50" font-size="24" fill="#000" textLength="104.00" lengthAdjust="spacingAndGlyphs" xml:space="preserve" >Hamilton</text>
<circle cx="1376.00" cy="1354.50" r="9.6" fill="#fff" stroke="#000" stroke-width="2.5"/>
<rect x="1486.75" y="1296.75" width="119.50" height="35.00" fill="#fff" stroke="#000" stroke-width="2.5"/>
<rect x="1498.75" y="1308.75" width="119.50" height="35.00" fill="#fff" stroke="#000" stroke-width="2.5"/>
<rect x="1510.75" y="1320.75" width="119.00" height="35.50" fill="#fff" stroke="#000" stroke-width="2.5"/>
<path d="M1786,1236.5 Q 1812,1236 1842,1227" fill="none" stroke="#000" stroke-width="2.5" stroke-linecap="round"/>
<circle cx="1756.25" cy="1243.75" r="19.2" fill="#fff" stroke="#000" stroke-width="2.5"/>
<polyline points="1756.25,1263.75 1756.25,1315.25" fill="none" stroke="#000" stroke-width="3.2" stroke-linecap="butt" stroke-linejoin="miter"/>
<polyline points="1736.65,1293.95 1756.25,1274.75 1775.85,1293.95" fill="none" stroke="#000" stroke-width="3.2" stroke-linecap="round" stroke-linejoin="miter"/>
<polyline points="1736.65,1333.95 1756.25,1314.75 1775.85,1333.95" fill="none" stroke="#000" stroke-width="3.2" stroke-linecap="round" stroke-linejoin="miter"/>
<text x="1706.75" y="1363.75" font-size="24" fill="#000" textLength="98.50" lengthAdjust="spacingAndGlyphs" xml:space="preserve" >Eudoxos</text>
<polyline points="1900.00,1215.50 1900.00,1267.00" fill="none" stroke="#000" stroke-width="3.2" stroke-linecap="butt" stroke-linejoin="miter"/>
<polyline points="1880.40,1245.70 1900.00,1226.50 1919.60,1245.70" fill="none" stroke="#000" stroke-width="3.2" stroke-linecap="round" stroke-linejoin="miter"/>
<polyline points="1880.40,1285.70 1900.00,1266.50 1919.60,1285.70" fill="none" stroke="#000" stroke-width="3.2" stroke-linecap="round" stroke-linejoin="miter"/>
<circle cx="1864.25" cy="1256.00" r="9.6" fill="#fff" stroke="#000" stroke-width="2.5"/>
<text x="1864.25" y="1317.50" font-size="24" fill="#000" textLength="67.50" lengthAdjust="spacingAndGlyphs" xml:space="preserve" >Euclid</text>
<circle cx="2032.50" cy="1243.75" r="19.2" fill="#fff" stroke="#000" stroke-width="2.5"/>
<polyline points="2032.50,1263.75 2032.50,1315.25" fill="none" stroke="#000" stroke-width="3.2" stroke-linecap="butt" stroke-linejoin="miter"/>
<polyline points="2012.90,1293.95 2032.50,1274.75 2052.10,1293.95" fill="none" stroke="#000" stroke-width="3.2" stroke-linecap="round" stroke-linejoin="miter"/>
<polyline points="2012.90,1333.95 2032.50,1314.75 2052.10,1333.95" fill="none" stroke="#000" stroke-width="3.2" stroke-linecap="round" stroke-linejoin="miter"/>
<text x="1906.25" y="1362.00" font-size="24" fill="#000" textLength="165.00" lengthAdjust="spacingAndGlyphs" xml:space="preserve" >Appolonius of</text>
</g>
<rect x="2154.5" y="0" width="650" height="50.2" fill="#000"/>
<rect x="2158" y="4" width="650" height="40" fill="#B3D395"/>
<text x="2162.25" y="35.80" font-size="30" fill="#000" textLength="118.70" lengthAdjust="spacingAndGlyphs" xml:space="preserve" >Content</text>
<rect x="2155.7" y="51.5" width="650" height="1361" fill="#B3D395" stroke="#6BB2F3" stroke-width="2.6"/>
<rect x="2157" y="52.8" width="645" height="2" fill="#E8F2F8"/>
<rect x="2159.6" y="90.8" width="636.4" height="28.4" fill="#000" stroke="#2F72DC" stroke-width="1.4"/>
<text x="2160.25" y="79.90" font-size="24" fill="#000" textLength="490.00" lengthAdjust="spacingAndGlyphs" xml:space="preserve" >Combinatorial Aspects of Clifford Algebra</text>
<text x="2160.25" y="113.80" font-size="24" fill="#B3D395" textLength="241.30" lengthAdjust="spacingAndGlyphs" xml:space="preserve" >Geo-MAP unification</text>
<text x="2160.25" y="147.70" font-size="24" fill="#000" textLength="216.10" lengthAdjust="spacingAndGlyphs" xml:space="preserve" >Geometric Algebra</text>
<text x="2160.25" y="181.50" font-size="24" fill="#000" textLength="266.50" lengthAdjust="spacingAndGlyphs" xml:space="preserve" >Geometric Algebra 0-5</text>
<text x="2160.25" y="215.40" font-size="24" fill="#000" textLength="370.00" lengthAdjust="spacingAndGlyphs" xml:space="preserve" >Geometric Algebra at SIGGRAPH</text>
<text x="2160.25" y="249.30" font-size="24" fill="#000" textLength="627.40" lengthAdjust="spacingAndGlyphs" xml:space="preserve" >Lecture notes from KTH Royal Institute of Technology</text>
<rect x="2167.7" y="1421.7" width="620.6" height="38.5" rx="6" ry="6" fill="#fff" stroke="#C9C9C9" stroke-width="1"/>
<rect x="2169" y="1459.6" width="618" height="1.2" fill="#B8B8B8" opacity=".7"/>
<text x="2443.95" y="1450.20" font-size="26" fill="#000" textLength="70.00" lengthAdjust="spacingAndGlyphs" xml:space="preserve" >Stäng</text>
<rect x="1158" y="109.5" width="990.5" height="1120" fill="#000" filter="url(#sh)"/>
<rect x="1156.6" y="108.2" width="993.4" height="1122.8" fill="#000"/>
<rect x="1158.4" y="110" width="989" height="1118.2" fill="#C9B347"/>
<rect x="1166" y="117.6" width="169.8" height="32.40" fill="#CDB954"/>
<rect x="1335.8" y="117.6" width="800.4" height="32.40" fill="#fff"/>
<rect x="1166" y="154.5" width="169.8" height="927.00" fill="#CDB954"/>
<rect x="1335.8" y="154.5" width="800.4" height="927.00" fill="#fff"/>
<rect x="1166" y="1086.4" width="169.8" height="62.60" fill="#CDB954"/>
<rect x="1335.8" y="1086.4" width="800.4" height="62.60" fill="#fff"/>
<rect x="1166" y="1154" width="169.8" height="31.40" fill="#CDB954"/>
<rect x="1335.8" y="1154" width="800.4" height="31.40" fill="#fff"/>
<rect x="1166" y="1189.6" width="169.8" height="32.20" fill="#CDB954"/>
<rect x="1335.8" y="1189.6" width="800.4" height="32.20" fill="#fff"/>
<text x="1166.25" y="143.75" font-size="26" fill="#000" textLength="55.50" lengthAdjust="spacingAndGlyphs" xml:space="preserve" >Title</text>
<text x="1166.75" y="626.25" font-size="26" fill="#000" textLength="143.00" lengthAdjust="spacingAndGlyphs" xml:space="preserve" >Description</text>
<text x="1166.75" y="1127.00" font-size="26" fill="#000" textLength="93.00" lengthAdjust="spacingAndGlyphs" xml:space="preserve" >Creator</text>
<text x="1166.75" y="1178.00" font-size="26" fill="#000" textLength="115.50" lengthAdjust="spacingAndGlyphs" xml:space="preserve" >Publisher</text>
<text x="1166.75" y="1215.50" font-size="26" fill="#000" textLength="56.00" lengthAdjust="spacingAndGlyphs" xml:space="preserve" >Date</text>
<text x="1336.25" y="143.75" font-size="26" fill="#000" textLength="260.00" lengthAdjust="spacingAndGlyphs" xml:space="preserve" >Geo-MAP unification</text>
<text x="1336.25" y="179.50" font-size="26" fill="#000" textLength="735.50" lengthAdjust="spacingAndGlyphs" xml:space="preserve" >Chapter 5 in the book "Geometric Computing with Clifford</text>
<text x="1336.25" y="211.50" font-size="26" fill="#000" textLength="693.50" lengthAdjust="spacingAndGlyphs" xml:space="preserve" >Algebras – Theoretical Foundations and Applications in</text>
<text x="1336.25" y="243.50" font-size="26" fill="#000" textLength="684.50" lengthAdjust="spacingAndGlyphs" xml:space="preserve" >Computer Vision and Robotics" (edited by G. Sommer).</text>
<text x="1336.25" y="307.50" font-size="26" fill="#000" textLength="389.50" lengthAdjust="spacingAndGlyphs" xml:space="preserve" >-----------------------------</text>
<text x="1336.25" y="371.50" font-size="26" fill="#000" textLength="733.00" lengthAdjust="spacingAndGlyphs" xml:space="preserve" >The aim of this chapter is to contribute to David Hestenes’</text>
<text x="1336.25" y="403.50" font-size="26" fill="#000" textLength="753.90" lengthAdjust="spacingAndGlyphs" xml:space="preserve" >vision – formulated on his web site – of desiging a universal</text>
<text x="1336.25" y="435.50" font-size="26" fill="#000" textLength="693.50" lengthAdjust="spacingAndGlyphs" xml:space="preserve" >geometric calculus based on geometric algebra. To this</text>
<text x="1336.25" y="467.50" font-size="26" fill="#000" textLength="795.90" lengthAdjust="spacingAndGlyphs" xml:space="preserve" >purpose we introduce a framework for geometric computations</text>
<text x="1336.25" y="499.50" font-size="26" fill="#000" textLength="678.80" lengthAdjust="spacingAndGlyphs" xml:space="preserve" >which we call geo-MAP (geo-Metric-Affine-Projective)</text>
<text x="1336.25" y="531.50" font-size="26" fill="#000" textLength="750.10" lengthAdjust="spacingAndGlyphs" xml:space="preserve" >unification. It makes use of geometric algebra to embed the</text>
<text x="1336.25" y="563.50" font-size="26" fill="#000" textLength="797.50" lengthAdjust="spacingAndGlyphs" xml:space="preserve" >representation of euclidean, affine and projective geometry in a</text>
<text x="1336.25" y="595.50" font-size="26" fill="#000" textLength="708.80" lengthAdjust="spacingAndGlyphs" xml:space="preserve" >way that enables coherent shifts between these different</text>
<text x="1336.25" y="627.50" font-size="26" fill="#000" textLength="162.20" lengthAdjust="spacingAndGlyphs" xml:space="preserve" >perspectives.</text>
<text x="1336.25" y="691.50" font-size="26" fill="#000" textLength="791.70" lengthAdjust="spacingAndGlyphs" xml:space="preserve" >To illustrate the versatility and usefulness of this framework, it</text>
<text x="1336.25" y="723.50" font-size="26" fill="#000" textLength="759.50" lengthAdjust="spacingAndGlyphs" xml:space="preserve" >is applied to a classical problem of plane geometrical optics,</text>
<text x="1336.25" y="755.50" font-size="26" fill="#000" textLength="749.70" lengthAdjust="spacingAndGlyphs" xml:space="preserve" >namely how to compute the envelope of the rays emanating</text>
<text x="1336.25" y="787.50" font-size="26" fill="#000" textLength="782.00" lengthAdjust="spacingAndGlyphs" xml:space="preserve" >from a point source of light after they have been reflected in a</text>
<text x="1336.25" y="819.50" font-size="26" fill="#000" textLength="304.10" lengthAdjust="spacingAndGlyphs" xml:space="preserve" >smoothly curved mirror.</text>
<text x="1336.25" y="883.50" font-size="26" fill="#000" textLength="752.30" lengthAdjust="spacingAndGlyphs" xml:space="preserve" >Moreover, in the appendix, we present a simple proof of the</text>
<text x="1336.25" y="915.50" font-size="26" fill="#000" textLength="778.10" lengthAdjust="spacingAndGlyphs" xml:space="preserve" >fact that the ‘natural basis candidate’ of a geometric algebra –</text>
<text x="1336.25" y="947.50" font-size="26" fill="#000" textLength="756.20" lengthAdjust="spacingAndGlyphs" xml:space="preserve" >the set of finite subsets of its formal variables – does in fact</text>
<text x="1336.25" y="979.50" font-size="26" fill="#000" textLength="776.50" lengthAdjust="spacingAndGlyphs" xml:space="preserve" >form a vector space basis for the algebra. This theorem opens</text>
<text x="1336.25" y="1011.50" font-size="26" fill="#000" textLength="797.50" lengthAdjust="spacingAndGlyphs" xml:space="preserve" >the possibility of a deductive presentation of geometric algebra</text>
<text x="1336.25" y="1043.50" font-size="26" fill="#000" textLength="250.90" lengthAdjust="spacingAndGlyphs" xml:space="preserve" >to a wider audience.</text>
<text x="1336.25" y="1111.20" font-size="26" fill="#000" textLength="718.50" lengthAdjust="spacingAndGlyphs" xml:space="preserve" >Ambjörn Naeve and Lars Svensson (KTH Royal Institute of</text>
<text x="1336.25" y="1143.50" font-size="26" fill="#000" textLength="410.50" lengthAdjust="spacingAndGlyphs" xml:space="preserve" >Technology), Stockholm, Sweden</text>
<text x="1336.25" y="1179.00" font-size="26" fill="#000" textLength="575.00" lengthAdjust="spacingAndGlyphs" xml:space="preserve" >Springer-Verlag  Berlin  Heidelberg  New York</text>
<text x="1336.25" y="1214.80" font-size="26" fill="#000" textLength="62.50" lengthAdjust="spacingAndGlyphs" xml:space="preserve" >2001</text>
</svg>
</body></html>
